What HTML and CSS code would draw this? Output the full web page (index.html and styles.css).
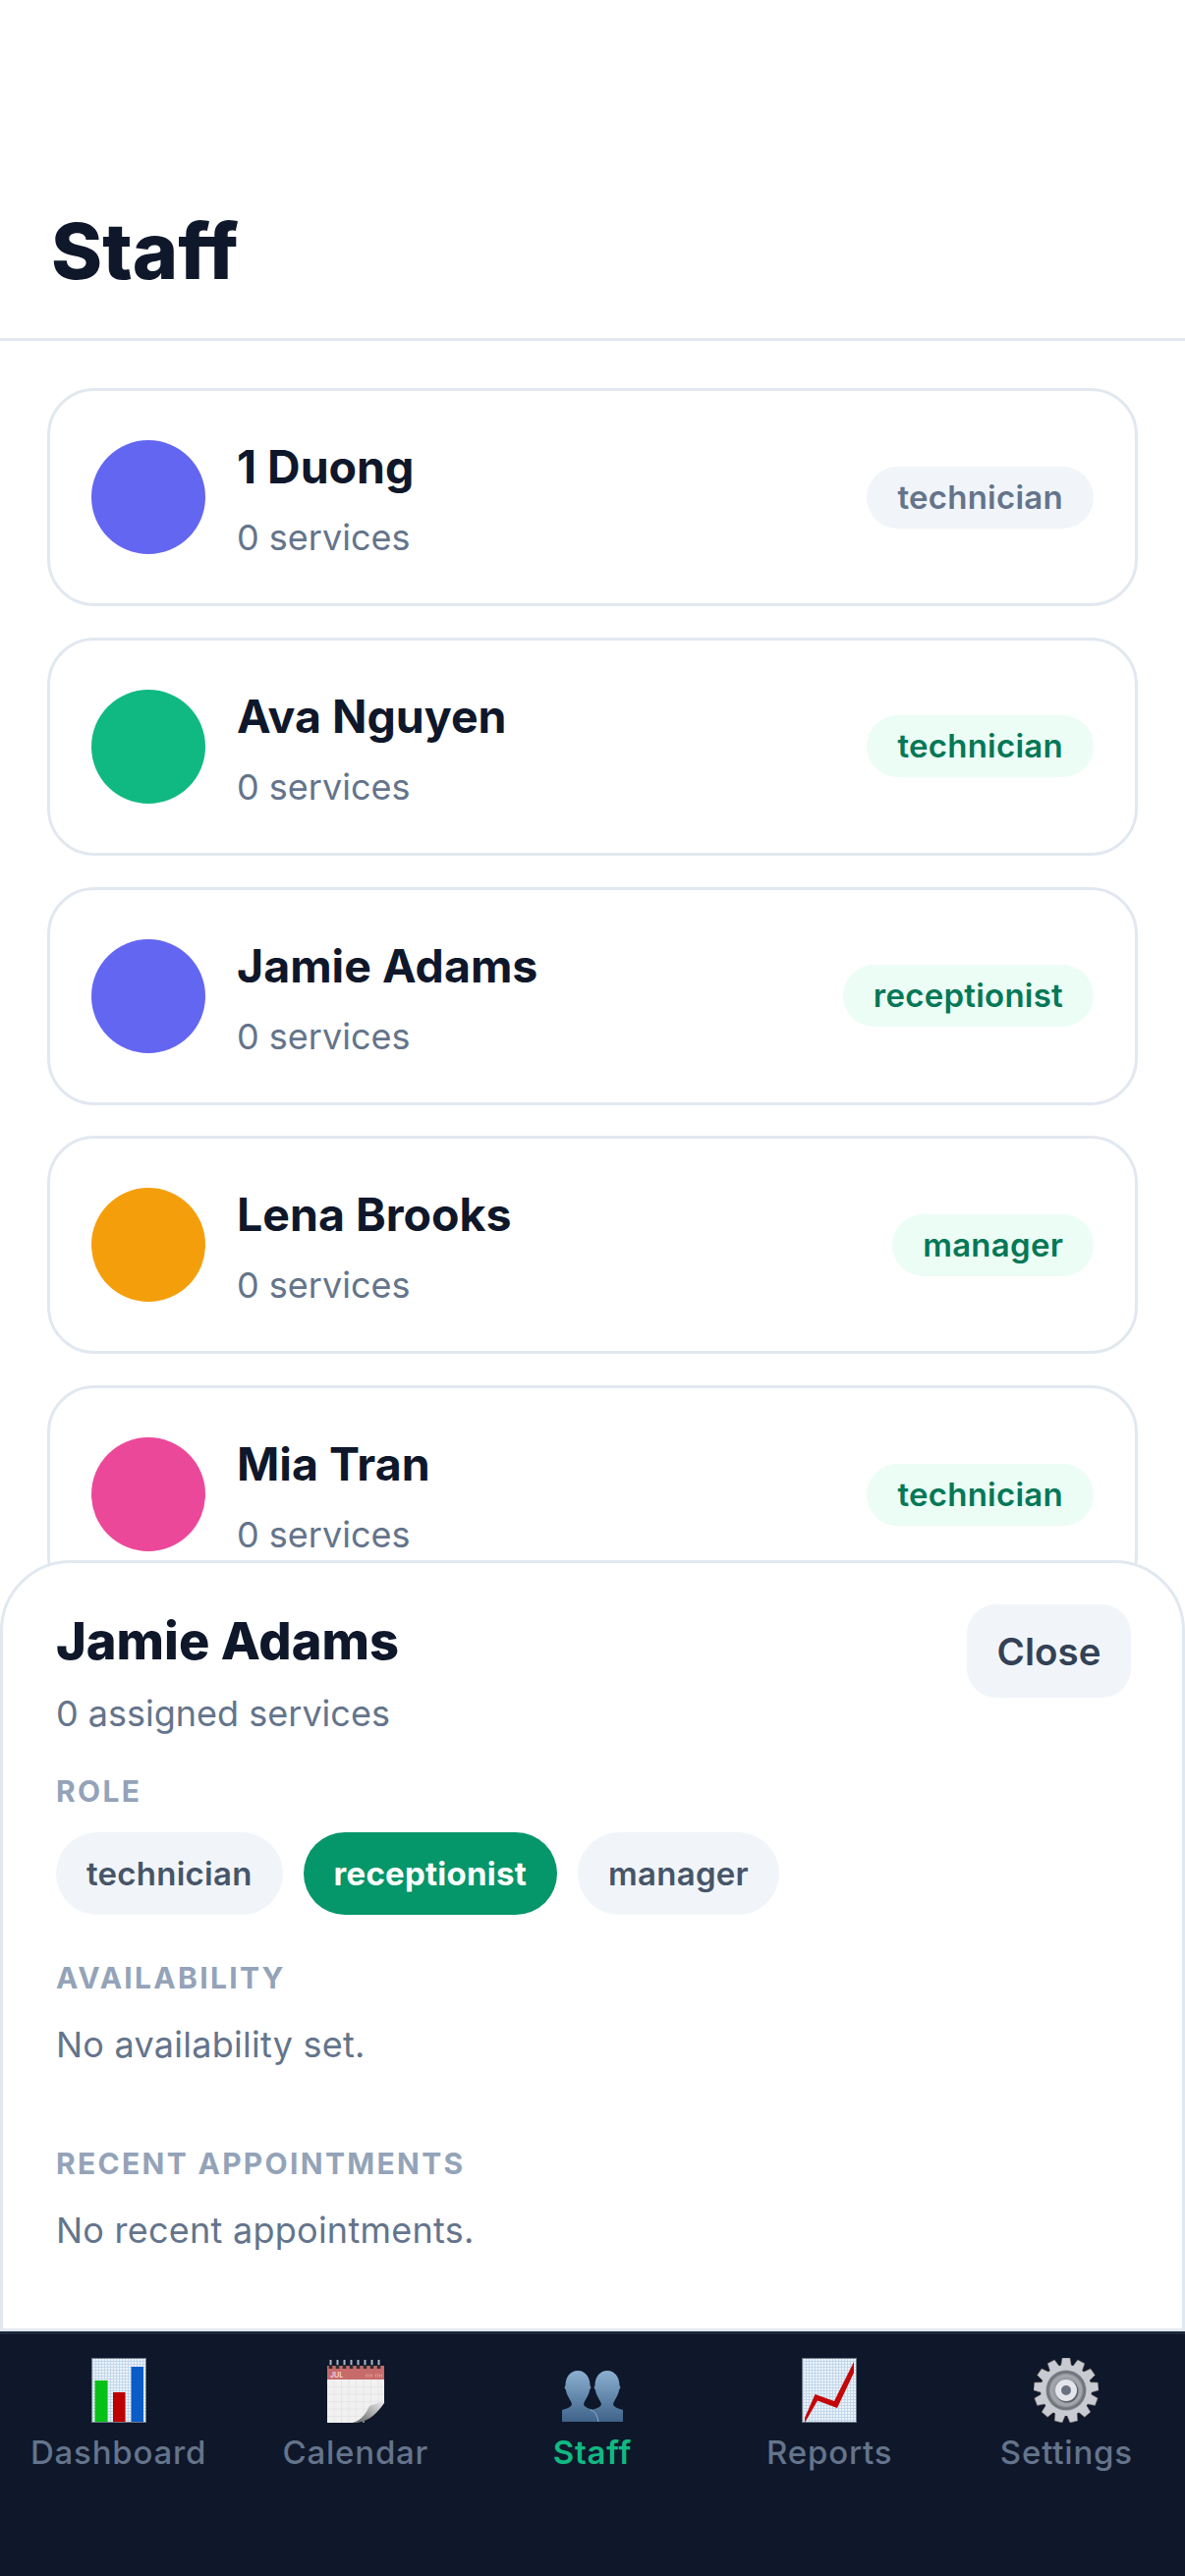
FILE: index.html
```html
<!DOCTYPE html>
<html lang="en">
<head>
  <meta charset="UTF-8">
  <meta name="viewport" content="width=device-width, initial-scale=1.0">
  <title>Staff</title>
  <link rel="stylesheet" href="styles.css">
</head>
<body>
  <div class="app">
    <header class="page-header">
      <h1>Staff</h1>
    </header>

    <main class="content">
      <!-- Staff list -->
      <div class="staff-list">
        <div class="staff-card">
          <span class="avatar avatar-indigo"></span>
          <div class="staff-info">
            <div class="staff-name">1 Duong</div>
            <div class="staff-meta">0 services</div>
          </div>
          <span class="badge badge-muted">technician</span>
        </div>
        <div class="staff-card">
          <span class="avatar avatar-green"></span>
          <div class="staff-info">
            <div class="staff-name">Ava Nguyen</div>
            <div class="staff-meta">0 services</div>
          </div>
          <span class="badge">technician</span>
        </div>
        <div class="staff-card">
          <span class="avatar avatar-indigo"></span>
          <div class="staff-info">
            <div class="staff-name">Jamie Adams</div>
            <div class="staff-meta">0 services</div>
          </div>
          <span class="badge">receptionist</span>
        </div>
        <div class="staff-card">
          <span class="avatar avatar-amber"></span>
          <div class="staff-info">
            <div class="staff-name">Lena Brooks</div>
            <div class="staff-meta">0 services</div>
          </div>
          <span class="badge">manager</span>
        </div>
        <div class="staff-card">
          <span class="avatar avatar-pink"></span>
          <div class="staff-info">
            <div class="staff-name">Mia Tran</div>
            <div class="staff-meta">0 services</div>
          </div>
          <span class="badge">technician</span>
        </div>
      </div>

      <!-- Detail sheet -->
      <section class="sheet">
        <div class="sheet-top">
          <div>
            <h2 class="sheet-name">Jamie Adams</h2>
            <p class="sheet-meta">0 assigned services</p>
          </div>
          <button type="button" class="close-btn">Close</button>
        </div>

        <h3 class="section-label label-role">ROLE</h3>
        <div class="role-pills">
          <span class="pill">technician</span>
          <span class="pill pill-active">receptionist</span>
          <span class="pill">manager</span>
        </div>

        <h3 class="section-label label-availability">AVAILABILITY</h3>
        <p class="sheet-text">No availability set.</p>

        <h3 class="section-label label-recent">RECENT APPOINTMENTS</h3>
        <p class="sheet-text">No recent appointments.</p>
      </section>
    </main>

    <!-- Bottom tabs -->
    <nav class="tab-bar">
      <div class="tab">
        <svg class="tab-icon" viewBox="0 0 66 66">
          <defs>
            <pattern id="chartGrid" width="3" height="3" patternUnits="userSpaceOnUse">
              <rect width="3" height="3" fill="#eef3f8"/>
              <path d="M0 .5H3M.5 0V3" stroke="#c3d8ec" stroke-width="1"/>
            </pattern>
          </defs>
          <rect x="5.5" y=".5" width="55" height="65" fill="url(#chartGrid)" stroke="#6f7a8c"/>
          <rect x="8.5" y="23" width="13" height="42" fill="#08c118"/>
          <rect x="27" y="35" width="12.5" height="30" fill="#bd0000"/>
          <rect x="45.5" y="9" width="12.5" height="56" fill="#0a5cc6"/>
        </svg>
        <span class="tab-label">Dashboard</span>
      </div>
      <div class="tab">
        <svg class="tab-icon" viewBox="0 0 66 66">
          <defs>
            <linearGradient id="curlShade" x1="0" y1="1" x2="1" y2="0">
              <stop offset="0" stop-color="#5c5c5c"/>
              <stop offset=".55" stop-color="#b5b5b5"/>
              <stop offset="1" stop-color="#fafafa"/>
            </linearGradient>
          </defs>
          <path d="M4 22H62V44C58 48 55 52 51 56C46 62 38 66 30 66H4Z" fill="#f1f1f1"/>
          <path d="M11 22V66M18.500 22V66M26 22V66M33.500 22V66M41 22V66M48.500 22V56M56 22V46M4 29.500H62M4 37H62M4 44.500H62M4 52H52M4 59.500H44" stroke="#e6e6e6" stroke-width="1"/>
          <path d="M62 40C58 46 52 47 47 49C44 55 40 63 30 66C44 66 52 60 62 46Z" fill="url(#curlShade)"/>
          <rect x="4" y="8" width="58" height="14" fill="#c76a6a"/>
          <text class="cal-month" x="7" y="20">JUL</text>
          <path d="M43 18H50M53 18H60" stroke="#dd9f9f" stroke-width="3" stroke-dasharray="1 1"/>
          <path d="M7.500 2V10M14.500 2V10M21.500 2V10M28.500 2V10M35.500 2V10M42.500 2V10M49.500 2V10M56.500 2V10" stroke="#aab6c6" stroke-width="2"/>
          <path d="M7.500 7V11M14.500 7V11M21.500 7V11M28.500 7V11M35.500 7V11M42.500 7V11M49.500 7V11M56.500 7V11" stroke="#2b2f36" stroke-width="3.500"/>
        </svg>
        <span class="tab-label">Calendar</span>
      </div>
      <div class="tab tab-active">
        <svg class="tab-icon" viewBox="0 0 66 66">
          <defs>
            <linearGradient id="personFill" gradientUnits="userSpaceOnUse" x1="0" y1="13" x2="0" y2="65">
              <stop offset="0" stop-color="#8bb0d0"/>
              <stop offset="1" stop-color="#3f6389"/>
            </linearGradient>
          </defs>
          <path fill="url(#personFill)" d="M48 13C56 13 60.500 20 60.500 28L61.500 30 60 33C59 39 55 43 54 47C54 50 60 52 64 53V65H32V53C36 52 42 50 42 47C41 43 37 39 36 33L34.500 30 35.500 28C35.500 20 40 13 48 13Z"/>
          <path fill="url(#personFill)" d="M18 13C26 13 30.500 20 30.500 28L31.500 30 30 33C29 39 25 43 24 47C24 50 30 52 34 53V65H2V53C6 52 12 50 12 47C11 43 7 39 6 33L4.500 30 5.500 28C5.500 20 10 13 18 13Z"/>
          <path d="M31 53C35 54 38 58 39 65" fill="none" stroke="#8fb2d2" stroke-width="1"/>
        </svg>
        <span class="tab-label">Staff</span>
      </div>
      <div class="tab">
        <svg class="tab-icon" viewBox="0 0 66 66">
          <rect x="5.500" y=".5" width="55" height="65" fill="url(#chartGrid)" stroke="#6f7a8c"/>
          <path d="M8 61L18.500 37L38 44L58 4V15L41 51L21 43.500L8 66Z" fill="#c40606"/>
        </svg>
        <span class="tab-label">Reports</span>
      </div>
      <div class="tab">
        <svg class="tab-icon" viewBox="0 0 66 66">
          <defs>
            <radialGradient id="gearDisc">
              <stop offset=".4" stop-color="#8a8d94"/>
              <stop offset=".75" stop-color="#a7a9af"/>
              <stop offset=".9" stop-color="#6c6f77"/>
              <stop offset="1" stop-color="#83868d"/>
            </radialGradient>
          </defs>
          <g fill="#c9cbd3" stroke="#6d6558" stroke-width=".5">
            <path id="gearTooth" d="M29 0H37L38.500 9H27.500Z"/>
            <use href="#gearTooth" transform="rotate(27.700 33 33)"/>
            <use href="#gearTooth" transform="rotate(55.400 33 33)"/>
            <use href="#gearTooth" transform="rotate(83.100 33 33)"/>
            <use href="#gearTooth" transform="rotate(110.800 33 33)"/>
            <use href="#gearTooth" transform="rotate(138.500 33 33)"/>
            <use href="#gearTooth" transform="rotate(166.200 33 33)"/>
            <use href="#gearTooth" transform="rotate(193.800 33 33)"/>
            <use href="#gearTooth" transform="rotate(221.500 33 33)"/>
            <use href="#gearTooth" transform="rotate(249.200 33 33)"/>
            <use href="#gearTooth" transform="rotate(276.900 33 33)"/>
            <use href="#gearTooth" transform="rotate(304.600 33 33)"/>
            <use href="#gearTooth" transform="rotate(332.300 33 33)"/>
          </g>
          <circle cx="33" cy="33" r="26" fill="#c9cbd3"/>
          <circle cx="33" cy="33" r="20.500" fill="url(#gearDisc)"/>
          <circle cx="34" cy="34" r="11.500" fill="#5f626a"/>
          <circle cx="33" cy="33" r="11" fill="#e3e5ea"/>
          <circle cx="33" cy="33" r="5" fill="#6a7280"/>
        </svg>
        <span class="tab-label">Settings</span>
      </div>
    </nav>
  </div>
</body>
</html>
```

FILE: styles.css
```css
/* General */
* {
  box-sizing: border-box;
}

body {
  font-family: Inter, "Liberation Sans", sans-serif;
  margin: 0;
  background-color: #fff;
  color: #0f172a;
}

.app {
  height: 2622px;
  display: flex;
  flex-direction: column;
  overflow: hidden;
}

/* Header */
.page-header {
  height: 347px;
  padding: 207px 52px 0;
  border-bottom: 3px solid #e2e8f0;
}

.page-header h1 {
  margin: 0;
  font-size: 79px;
  line-height: 96px;
  font-weight: 800;
}

/* List */
.content {
  flex: 1;
  position: relative;
  overflow: hidden;
}

.staff-list {
  padding: 48px 48px;
  display: flex;
  flex-direction: column;
  gap: 31.75px;
}

.staff-card {
  height: 222px;
  flex-shrink: 0;
  display: flex;
  align-items: center;
  gap: 32px;
  padding: 0 42px;
  border: 3px solid #e2e8f0;
  border-radius: 48px;
  background-color: #fff;
}

.avatar {
  width: 116px;
  height: 116px;
  border-radius: 50%;
  flex-shrink: 0;
}

.avatar-indigo { background-color: #6366f1; }
.avatar-green { background-color: #10b981; }
.avatar-amber { background-color: #f59e0b; }
.avatar-pink { background-color: #ec4899; }

.staff-info {
  flex: 1;
  padding-top: 5px;
}

.staff-name {
  font-size: 46.5px;
  line-height: 54px;
  font-weight: 700;
}

.staff-meta {
  margin-top: 23px;
  font-size: 36px;
  line-height: 44px;
  color: #64748b;
}

.badge {
  padding: 0 31px;
  height: 63px;
  line-height: 63px;
  border-radius: 32px;
  font-size: 33px;
  font-weight: 600;
  letter-spacing: 0.25px;
  background-color: #ecfdf5;
  color: #047857;
}

.badge-muted {
  background-color: #f1f5f9;
  color: #64748b;
}

/* Sheet */
.sheet {
  position: absolute;
  left: 0;
  right: 0;
  bottom: 0;
  height: 785px;
  padding: 42px 54px 0;
  background-color: #fff;
  border: 3px solid #e2e8f0;
  border-radius: 72px 72px 0 0;
}

.sheet-top {
  display: flex;
  justify-content: space-between;
  align-items: flex-start;
}

.sheet-name {
  margin: 6px 0 0;
  font-size: 52.3px;
  line-height: 62px;
  font-weight: 800;
}

.sheet-meta {
  margin: 21px 0 0;
  font-size: 36px;
  line-height: 44px;
  color: #64748b;
}

.close-btn {
  width: 167px;
  height: 95px;
  margin-right: -2px;
  border: none;
  border-radius: 30px;
  background-color: #f1f5f9;
  color: #334155;
  font-family: inherit;
  font-size: 38.5px;
  font-weight: 600;
}

.section-label {
  margin: 0;
  font-size: 30px;
  line-height: 36px;
  font-weight: 700;
  letter-spacing: 2.3px;
  color: #94a3b8;
}

.label-role {
  margin-top: 39px;
}

.label-availability {
  margin-top: 46px;
}

.label-recent {
  margin-top: 81px;
}

.role-pills {
  display: flex;
  gap: 21px;
  margin-top: 24px;
}

.pill {
  height: 84px;
  line-height: 84px;
  padding: 0 31px;
  border-radius: 42px;
  background-color: #f1f5f9;
  color: #475569;
  font-size: 33px;
  font-weight: 600;
  letter-spacing: 0.25px;
}

.pill-active {
  background-color: #059669;
  color: #fff;
  font-weight: 700;
}

.sheet-text {
  margin: 28px 0 0;
  font-size: 36px;
  line-height: 44px;
  letter-spacing: 0.25px;
  color: #64748b;
}

/* Tabs */
.tab-bar {
  height: 249px;
  display: grid;
  grid-template-columns: repeat(5, 1fr);
  padding-top: 24px;
  background-color: #0f172a;
  border-top: 3px solid #1e293b;
}

.tab {
  display: flex;
  flex-direction: column;
  align-items: center;
}

.tab-icon {
  width: 66px;
  height: 66px;
}

.cal-month {
  font-size: 7px;
  font-weight: 600;
  fill: #f6dede;
}

.tab-label {
  margin-top: 8px;
  font-size: 33px;
  line-height: 44px;
  font-weight: 500;
  letter-spacing: 0.8px;
  color: #64748b;
}

.tab-active .tab-label {
  color: #10b981;
  font-weight: 600;
}
```
